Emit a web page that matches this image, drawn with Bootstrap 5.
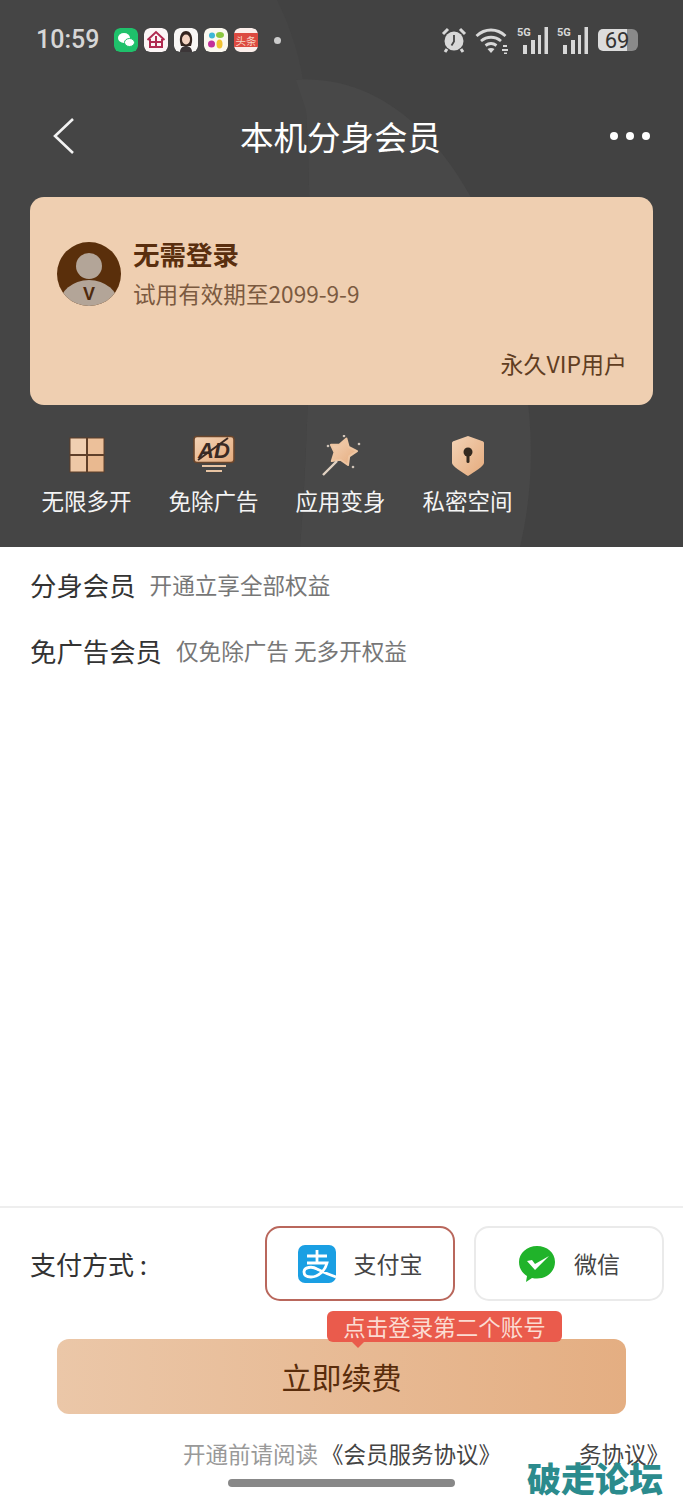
<!DOCTYPE html>
<html lang="zh-CN">
<head>
  <meta charset="UTF-8" />
  <meta name="viewport" content="width=device-width, initial-scale=1" />
  <title>本机分身会员</title>
  <link href="https://cdn.jsdelivr.net/npm/bootstrap@5.3.3/dist/css/bootstrap.min.css" rel="stylesheet" />
  <style>
    body { font-family: "Noto Sans CJK SC", "Liberation Sans", sans-serif; background-color: #fff; color: #333; height: 1500px; overflow: hidden; }
    .page-wrap { height: 1500px; }
    .hero { height: 547px; background-color: #424242; color: #fff; position: relative; overflow: hidden; }
    .hero > * { position: relative; }
    .hero > .hero-bg { position: absolute; top: 0; left: 0; }
    .status-bar { height: 80px; padding: 0 44px 0 36px; color: #d6d6d6; }
    .status-time { font-family: Roboto, sans-serif; font-size: 25px; font-weight: 500; width: 78px; }
    .app-ico { width: 24px; height: 24px; border-radius: 6px; margin-right: 6px; display: block; }
    .notif-dot { width: 7px; height: 7px; border-radius: 50%; background: #ccc; margin-left: 10px; }
    .nav-bar { height: 114px; margin-bottom: 3px; padding: 0 32px 2px 52px; }
    .nav-title { font-size: 33.5px; line-height: 1; margin-left: -4px; }
    .member-box { height: 208px; margin: 0 30px; border-radius: 14px; background-color: #efcfb1; color: #5a2f0f; padding: 42px 26px 0 27px; }
    .avatar-ico { margin-top: 3px; }
    .member-name { font-size: 26.5px; font-weight: 700; line-height: 30px; }
    .member-sub { font-size: 22.6px; line-height: 30px; color: #7b5a40; margin-top: 10px; }
    .member-vip { font-size: 23px; line-height: 30px; color: #5f3d22; margin-top: 39px; }
    .perks { padding: 30px 0 0 23px; }
    .perk-item { width: 127px; }
    .perk-ico { height: 42px; }
    .perk-label { font-size: 22.5px; line-height: 30px; margin-top: 8px; color: #f4f4f4; }
    .plan-row { padding-left: 30px; }
    .plan-row + .plan-row { margin-top: 26px; }
    .plan-name { font-size: 26.4px; line-height: 40px; color: #333; }
    .plan-desc { font-size: 22.6px; color: #777; margin-left: 14px; }
    .plans { padding-top: 18px; }
    .pay-area { height: 294px; border-top: 2px solid #eee; position: relative; }
    .pay-row { padding: 18px 19px 0 30px; }
    .pay-label { font-size: 26px; color: #333; }
    .pay-opt { width: 190px; height: 75px; border: 2px solid #eaeaea; border-radius: 15px; font-size: 23px; color: #444; background: #fff; gap: 18px; }
    .pay-opt.picked { border-color: #b9675c; }
    .pay-gap { margin-left: 19px; }
    .renew-btn { display: block; width: 569px; height: 75px; margin: 38px 0 0 57px; border: 0; border-radius: 12px; background: linear-gradient(90deg, #ebc7a8, #e4ae82); color: #5a2d0c; font-size: 30px; }
    .login-tip { position: absolute; left: 327px; top: 103px; width: 235px; height: 31px; border-radius: 6px; background: #ea5b4c; color: #fbdcd2; font-size: 22.5px; line-height: 31px; text-align: center; }
    .login-tip::after { content: ""; position: absolute; left: 25px; top: 31px; border: 6px solid transparent; border-top-color: #ea5b4c; border-bottom: 0; }
    .agree-row { font-size: 22.5px; line-height: 30px; color: #999; padding-left: 183px; margin-top: 24px; white-space: nowrap; }
    .agree-link { color: #444; margin-left: 3px; }
    .agree-more { color: #444; margin-left: 78px; }
    .home-bar { position: absolute; left: 228px; top: 271px; width: 227px; height: 8px; border-radius: 4px; background: #888; }
    .watermark { position: absolute; left: 527px; top: 248px; font-size: 34px; line-height: 44px; font-weight: 900; color: #2b8b8d; white-space: nowrap; }
  </style>
</head>
<body>
  <div class="page-wrap d-flex flex-column">
    <div class="hero">
      <svg class="hero-bg" width="683" height="547" viewBox="0 0 683 547">
        <path d="M0 0H277C292 30 305 70 306 110C312 200 312 400 300 547H0Z" fill="#454545"/>
        <path d="M296 80C400 72 480 175 510 300C530 390 540 460 520 547H300C312 400 312 200 306 110Z" fill="#484848"/>
      </svg>

      <div class="status-bar d-flex align-items-center">
        <span class="status-time">10:59</span>
        <svg class="app-ico" viewBox="0 0 24 24"><rect width="24" height="24" rx="6" fill="#1fc16b"/><ellipse cx="10" cy="10" rx="6" ry="5" fill="#fff"/><ellipse cx="15.500" cy="14.500" rx="5" ry="4" fill="#fff" stroke="#1fc16b"/></svg>
        <svg class="app-ico" viewBox="0 0 24 24"><rect width="24" height="24" rx="6" fill="#fbf5f5"/><path d="M3.500 12L12 4l8.500 8M6 11v8h12v-8M7 14h10M12 8v11" fill="none" stroke="#b02a50" stroke-width="2"/></svg>
        <svg class="app-ico" viewBox="0 0 24 24"><rect width="24" height="24" rx="6" fill="#f8f6f4"/><path d="M6 14C5 6 9 3 12 3s7 3 6 11l-1 4H7z" fill="#33241e"/><ellipse cx="12" cy="11.500" rx="4" ry="5" fill="#f2d2c0"/><path d="M6 24c0-4 3-6 6-6s6 2 6 6z" fill="#3c3638"/></svg>
        <svg class="app-ico" viewBox="0 0 24 24"><rect width="24" height="24" rx="6" fill="#fbf8ef"/><circle cx="8" cy="7.500" r="3" fill="#3db7d6"/><ellipse cx="16" cy="7" rx="4" ry="3" fill="#8cc63f"/><circle cx="7.500" cy="16" r="3.500" fill="#c22f9a"/><ellipse cx="15.500" cy="16" rx="3" ry="4.500" fill="#f1c232"/></svg>
        <svg class="app-ico" viewBox="0 0 24 24"><rect width="24" height="24" rx="6" fill="#fbeeea"/><rect y="5" width="24" height="14" fill="#dc4a40"/><text x="12" y="16.500" text-anchor="middle" font-size="10.500" fill="#f8d6c4" font-family="Noto Sans CJK SC">头条</text></svg>
        <span class="notif-dot"></span>

        <div class="ms-auto d-flex align-items-center">
          <svg width="26" height="28" viewBox="0 0 26 28"><circle cx="13" cy="15" r="9.500" fill="#d8d8d8"/><path d="M13 9v6.500l-2.500 4" fill="none" stroke="#444" stroke-width="1.800"/><path d="M2 8l5-5M24 8l-5-5M6 23l-2 3M20 23l2 3" stroke="#d8d8d8" stroke-width="3"/></svg>
          <svg class="ms-2" width="34" height="28" viewBox="0 0 34 28"><path d="M1.500 10C10 2 22 2 30.500 10M6 15c6-5 14-5 20 0M10.500 19.500c3.500-2.500 7.500-2.500 11 0" fill="none" stroke="#d8d8d8" stroke-width="2.800"/><path d="M16 27l-3.500-4c2-1.500 5-1.500 7 0z" fill="#d8d8d8"/><path d="M28 20h4M27 24h6M29 27.500h3" stroke="#d8d8d8" stroke-width="2"/></svg>
          <svg class="ms-2" width="32" height="30" viewBox="0 0 32 30"><text x="0" y="11" font-size="11" font-weight="700" fill="#d8d8d8" font-family="Roboto">5G</text><path d="M6 20h4v9H6zM14 15h4v14h-4zM21 10h3v19h-3zM27.500 2h3.500v27h-3.500z" fill="#d8d8d8"/></svg>
          <svg class="ms-2" width="32" height="30" viewBox="0 0 32 30"><text x="0" y="11" font-size="11" font-weight="700" fill="#d8d8d8" font-family="Roboto">5G</text><path d="M6 20h4v9H6zM14 15h4v14h-4zM21 10h3v19h-3zM27.500 2h3.500v27h-3.500z" fill="#d8d8d8"/></svg>
          <svg class="ms-2" width="42" height="24" viewBox="0 0 42 24"><path d="M6 1h24v22H6a5 5 0 0 1-5-5V6a5 5 0 0 1 5-5z" fill="#dcdcdc"/><path d="M30 1h5a6 6 0 0 1 6 6v10a6 6 0 0 1-6 6h-5z" fill="#8a8a8a"/><text x="20" y="20" text-anchor="middle" font-size="22" fill="#333" font-family="Roboto">69</text></svg>
        </div>
      </div>

      <div class="nav-bar d-flex align-items-center justify-content-between">
        <svg width="24" height="38" viewBox="0 0 24 38"><path d="M21 2L3 19l18 17" fill="none" stroke="#f2f2f2" stroke-width="2.600"/></svg>
        <span class="nav-title">本机分身会员</span>
        <svg width="42" height="10" viewBox="0 0 42 10"><circle cx="5" cy="5" r="4" fill="#fff"/><circle cx="21" cy="5" r="4" fill="#fff"/><circle cx="37" cy="5" r="4" fill="#fff"/></svg>
      </div>

      <div class="member-box">
        <div class="d-flex">
          <svg width="64" height="64" viewBox="0 0 64 64" class="flex-shrink-0 avatar-ico"><defs><clipPath id="avaClip"><circle cx="32" cy="32" r="32"/></clipPath></defs><circle cx="32" cy="32" r="32" fill="#5a2f0b"/><circle cx="32" cy="24" r="13" fill="#b3a598"/><ellipse cx="32" cy="64" rx="30" ry="26" fill="#b3a598" clip-path="url(#avaClip)"/><text x="32" y="58" text-anchor="middle" font-size="18" font-weight="700" fill="#4e2a0e" font-family="Liberation Sans">V</text></svg>
          <div class="ms-2 ps-1">
            <div class="member-name">无需登录</div>
            <div class="member-sub">试用有效期至2099-9-9</div>
          </div>
        </div>
        <div class="member-vip text-end">永久VIP用户</div>
      </div>

      <div class="perks d-flex text-center">
        <div class="perk-item">
          <svg class="perk-ico" width="38" height="42" viewBox="0 0 38 42"><defs><linearGradient id="goldFill" x1="0" y1="0" x2="1" y2="1"><stop offset="0" stop-color="#f3d3b6"/><stop offset="1" stop-color="#e5ab7d"/></linearGradient></defs><g stroke="#5f3f29" stroke-width="1"><rect x="2" y="3" width="16.500" height="16.500" fill="#f0cfb1"/><rect x="19.500" y="3" width="16.500" height="16.500" fill="#ecc09a"/><rect x="2" y="20.500" width="16.500" height="16.500" fill="#eec8a6"/><rect x="19.500" y="20.500" width="16.500" height="16.500" fill="#e9b990"/></g></svg>
          <div class="perk-label">无限多开</div>
        </div>
        <div class="perk-item">
          <svg class="perk-ico" width="44" height="42" viewBox="0 0 44 42"><rect x="2" y="1.500" width="40" height="26" rx="3" fill="url(#goldFill)" stroke="#6a452b" stroke-width="1.600"/><text x="22" y="23" text-anchor="middle" font-size="22" font-weight="700" font-style="italic" fill="#3a2a24" font-family="Liberation Sans">AD</text><path d="M6 25L36 3" stroke="#3a2a24" stroke-width="2"/><path d="M10 31h24M14 36h16" stroke="#e8c4a3" stroke-width="2.200"/></svg>
          <div class="perk-label">免除广告</div>
        </div>
        <div class="perk-item">
          <svg class="perk-ico" width="40" height="42" viewBox="0 0 40 42"><path d="M25.400 3.500L27.700 12 36 16.200 28.200 21.400 27 30 19.400 24.700 10.800 26 13.500 17.400 9.900 9.800 18.600 9.500z" fill="url(#goldFill)" stroke="#eec5a1" stroke-width="2" stroke-linejoin="round"/><path d="M2 40l14-14" stroke="#e2d2c2" stroke-width="2.400"/><circle cx="7" cy="11" r="1.300" fill="#cfc3b8"/><circle cx="23" cy="1" r="1.300" fill="#cfc3b8"/><circle cx="38" cy="9" r="1.300" fill="#cfc3b8"/><circle cx="32" cy="32" r="1.300" fill="#cfc3b8"/></svg>
          <div class="perk-label">应用变身</div>
        </div>
        <div class="perk-item">
          <svg class="perk-ico" width="34" height="42" viewBox="0 0 34 42"><path d="M17 1l14 5c1 .4 2 1 2 2v20c0 3-10 9-16 13C11 37 1 31 1 28V8c0-1 1-1.600 2-2z" fill="url(#goldFill)"/><circle cx="17" cy="17" r="4.500" fill="#33291f"/><rect x="15.500" y="18" width="3" height="10" rx="1.500" fill="#33291f"/></svg>
          <div class="perk-label">私密空间</div>
        </div>
      </div>
    </div>

    <div class="plans flex-grow-1">
      <div class="plan-row d-flex align-items-center"><span class="plan-name">分身会员</span><span class="plan-desc">开通立享全部权益</span></div>
      <div class="plan-row d-flex align-items-center"><span class="plan-name">免广告会员</span><span class="plan-desc">仅免除广告 无多开权益</span></div>
    </div>

    <div class="pay-area">
      <div class="pay-row d-flex align-items-center justify-content-between">
        <span class="pay-label me-auto">支付方式 :</span>
        <div class="pay-opt picked d-flex align-items-center justify-content-center">
          <svg width="38" height="38" viewBox="0 0 38 38"><rect width="38" height="38" rx="7" fill="#1a9fe3"/><path d="M9 11h20M19 5v13M9 18h20c-2 8-9 14-16 14-5 0-7-2-7-5 0-5 8-6 13-3 4 2 10 5 19 8" fill="none" stroke="#fff" stroke-width="2.800"/></svg>
          <span>支付宝</span>
        </div>
        <div class="pay-opt pay-gap d-flex align-items-center justify-content-center">
          <svg width="38" height="38" viewBox="0 0 38 38"><path d="M19 1C9 1 1 8 1 17c0 6 3 11 8 14l-1 6 6-4c2 .5 3 .5 5 .5 10 0 18-7 18-16.500S29 1 19 1z" fill="#20b32a"/><path d="M9 16l5-1 3 4L31 11 17 25z" fill="#fff"/></svg>
          <span>微信</span>
        </div>
      </div>
      <button class="renew-btn" type="button">立即续费</button>
      <div class="login-tip">点击登录第二个账号</div>
      <div class="agree-row">开通前请阅读<span class="agree-link">《会员服务协议》</span><span class="agree-more">务协议》</span></div>
      <div class="home-bar"></div>
      <div class="watermark">破走论坛</div>
    </div>
  </div>
  <script src="https://cdn.jsdelivr.net/npm/bootstrap@5.3.3/dist/js/bootstrap.bundle.min.js"></script>
</body>
</html>
